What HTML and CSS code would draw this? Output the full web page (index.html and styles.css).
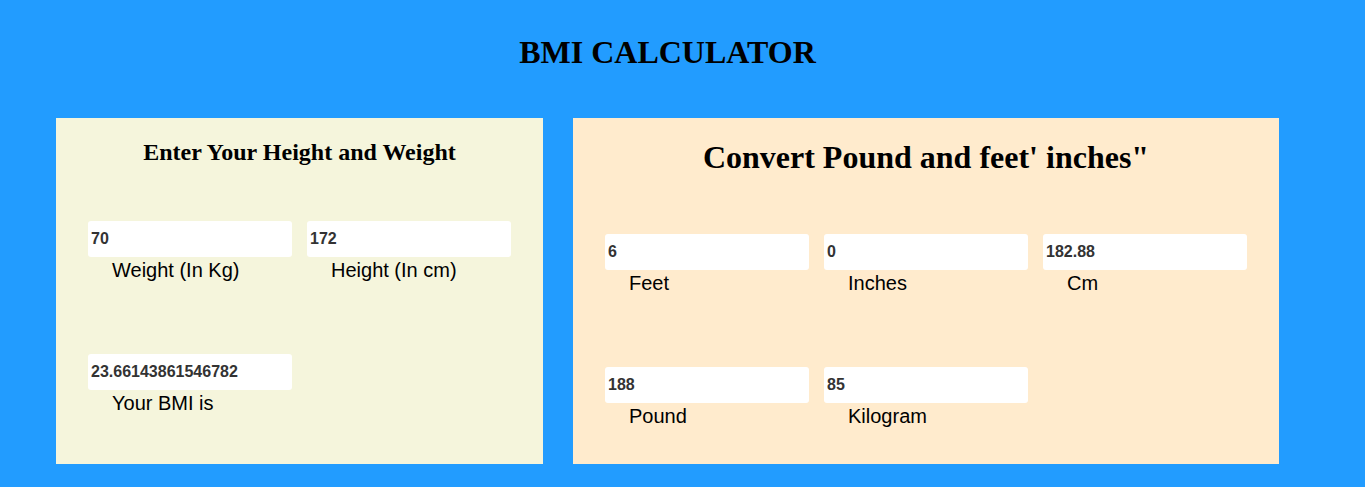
FILE: index.html
```html
<!DOCTYPE html>
<html lang="en">
<head>
<meta charset="utf-8">
<title>BMI Calculator</title>
<link rel="stylesheet" href="styles.css">
</head>
<body>
<main class="page">
  <h1 class="title">BMI CALCULATOR</h1>
  <div class="panels">
    <section class="panel panel-bmi">
      <h2 class="panel-heading heading-small">Enter Your Height and Weight</h2>
      <div class="grid grid-2">
        <div class="field">
          <input class="field-input" type="text" value="70">
          <div class="field-label">Weight (In Kg)</div>
        </div>
        <div class="field">
          <input class="field-input" type="text" value="172">
          <div class="field-label">Height (In cm)</div>
        </div>
        <div class="field">
          <input class="field-input" type="text" value="23.66143861546782">
          <div class="field-label">Your BMI is</div>
        </div>
      </div>
    </section>
    <section class="panel panel-convert">
      <h2 class="panel-heading heading-large">Convert Pound and feet' inches"</h2>
      <div class="grid grid-3">
        <div class="field">
          <input class="field-input" type="text" value="6">
          <div class="field-label">Feet</div>
        </div>
        <div class="field">
          <input class="field-input" type="text" value="0">
          <div class="field-label">Inches</div>
        </div>
        <div class="field">
          <input class="field-input" type="text" value="182.88">
          <div class="field-label">Cm</div>
        </div>
        <div class="field">
          <input class="field-input" type="text" value="188">
          <div class="field-label">Pound</div>
        </div>
        <div class="field">
          <input class="field-input" type="text" value="85">
          <div class="field-label">Kilogram</div>
        </div>
      </div>
    </section>
  </div>
</main>
</body>
</html>
```

FILE: styles.css
```css
html, body {
  margin: 0;
  padding: 0;
}

body {
  background: #229cff;
  font-family: "Liberation Serif", "Times New Roman", serif;
  color: #000;
}

.page {
  margin-left: 56px;
  width: 1223px;
  padding-top: 34px;
}

.title {
  margin: 0;
  font-size: 32px;
  line-height: 36px;
  font-weight: bold;
  text-align: center;
}

.panels {
  display: flex;
  gap: 30px;
  margin-top: 48px;
}

.panel {
  box-sizing: border-box;
  height: 346px;
  padding: 21px 32px 0 32px;
}

.panel-bmi {
  width: 487px;
  background: #f5f5dc;
}

.panel-convert {
  width: 706px;
  background: #ffebcd;
}

.panel-heading {
  margin: 0;
  font-weight: bold;
  text-align: center;
}

.heading-small {
  font-size: 24px;
  line-height: 26px;
  margin-bottom: 56px;
}

.heading-large {
  font-size: 32px;
  line-height: 36px;
  margin-bottom: 59px;
}

.grid {
  display: grid;
  column-gap: 15px;
  row-gap: 72px;
}

.grid-2 {
  grid-template-columns: 204px 204px;
}

.grid-3 {
  grid-template-columns: 204px 204px 204px;
}

.field-input {
  display: block;
  box-sizing: border-box;
  width: 100%;
  height: 36px;
  margin: 0;
  padding: 0 3px;
  border: none;
  border-radius: 3px;
  background: #fff;
  font-family: "Liberation Sans", Arial, sans-serif;
  font-size: 16px;
  font-weight: bold;
  color: #333;
  outline: none;
}

.field-label {
  margin-top: 2px;
  padding-left: 24px;
  font-family: "Liberation Sans", Arial, sans-serif;
  font-size: 20px;
  line-height: 23px;
  color: #000;
}
```
